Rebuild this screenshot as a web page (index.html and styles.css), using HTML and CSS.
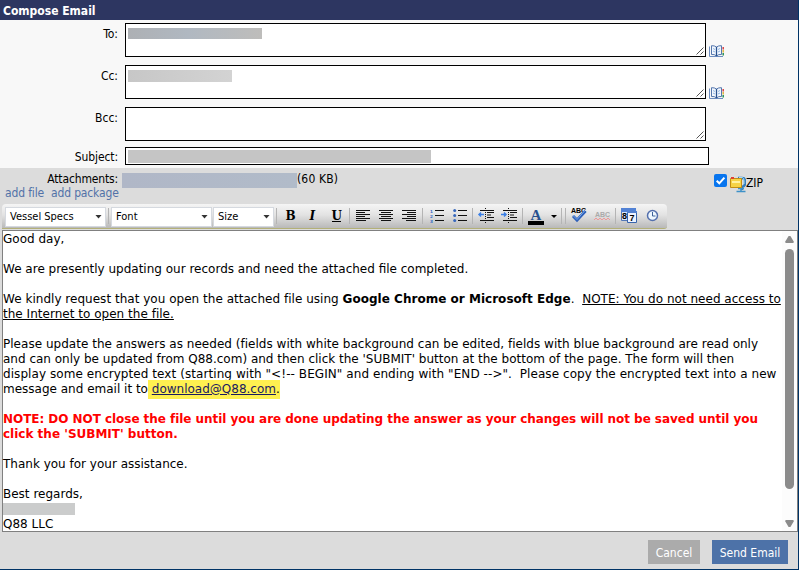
FILE: index.html
```html
<!DOCTYPE html>
<html>
    <head>
        <meta charset="utf-8">
        <title>Compose Email</title>
        <link rel="stylesheet" href="styles.css">
    </head>
    <body>
        <div class="window">
            <h1 class="title">Compose Email</h1>
            <div class="fields">
                <div class="row">
                    <label>To:</label>
                    <div class="area"><span class="mask mask-to"></span><svg class="grip" width="8" height="8"><path d="M0.5 7.5L7.5 0.5M4.5 7.5L7.5 4.5"/></svg></div>
                    <svg class="book" width="15" height="12" viewBox="0 0 15 12"><path d="M.5 1.5V11.5H14" fill="none" stroke="#6d8dc0"/><path d="M2.500 .7Q5.500 .5 7.5 2Q9.500 .5 12.5 .7V9.500Q9.500 9 7.5 11Q5.500 9 2.500 9.500Z" fill="#f2f7fe" stroke="#5577ad"/><path d="M7.5 2V11" stroke="#28518f" stroke-width="1.3"/><path d="M4 3.500L6 4.500M4 6L6 7M9 4.500L11 3.500M9 7L11 6" stroke="#91b7e4"/><path d="M14.200 2V4.500" stroke="#d84343" stroke-width="1.500"/><path d="M14.200 5V7.500" stroke="#dfb63f" stroke-width="1.500"/><path d="M14.200 8V10.500" stroke="#268f59" stroke-width="1.500"/></svg>
                </div>
                <div class="row">
                    <label>Cc:</label>
                    <div class="area"><span class="mask mask-cc"></span><svg class="grip" width="8" height="8"><path d="M0.5 7.5L7.5 0.5M4.5 7.5L7.5 4.5"/></svg></div>
                    <svg class="book" width="15" height="12" viewBox="0 0 15 12"><path d="M.5 1.5V11.5H14" fill="none" stroke="#6d8dc0"/><path d="M2.500 .7Q5.500 .5 7.5 2Q9.500 .5 12.5 .7V9.500Q9.500 9 7.5 11Q5.500 9 2.500 9.500Z" fill="#f2f7fe" stroke="#5577ad"/><path d="M7.5 2V11" stroke="#28518f" stroke-width="1.3"/><path d="M4 3.500L6 4.500M4 6L6 7M9 4.500L11 3.500M9 7L11 6" stroke="#91b7e4"/><path d="M14.200 2V4.500" stroke="#d84343" stroke-width="1.500"/><path d="M14.200 5V7.500" stroke="#dfb63f" stroke-width="1.500"/><path d="M14.200 8V10.500" stroke="#268f59" stroke-width="1.500"/></svg>
                </div>
                <div class="row">
                    <label>Bcc:</label>
                    <div class="area"><svg class="grip" width="8" height="8"><path d="M0.5 7.5L7.5 0.5M4.5 7.5L7.5 4.5"/></svg></div>
                </div>
                <div class="row subject">
                    <label>Subject:</label>
                    <div class="area"><span class="mask mask-subject"></span></div>
                </div>
            </div>
            <div class="attachments">
                <div class="left">
                    <div class="label">Attachments:</div>
                    <div class="links"><a>add file</a><a>add package</a></div>
                </div>
                <span class="mask mask-file"></span>
                <span class="size">(60 KB)</span>
                <div class="zip">
                    <svg width="13" height="13"><rect width="13" height="13" rx="2" fill="#0875ee"/><path d="M2.7 6.7L5.3 9.3L10.4 3.6" fill="none" stroke="#fff" stroke-width="2"/></svg>
                    <svg class="zip-icon" width="16" height="17"><path d="M8 2H12Q15 2 15 5V8Q15 10 12 11V14" fill="none" stroke="#337ebd" stroke-width="2.5"/><path d="M9 1.5H12.5Q14 2 14 5V8" fill="none" stroke="#a7dcf7"/><path d="M6.5 15.5H15.5M8 12.5H14M11 12V16" stroke="#3d91c8" stroke-width="1.5"/><path d="M.5 2.500H11.500V11.5H.5Z" fill="#f6d346" stroke="#c38e13"/><path d="M2 6H10" stroke="#fff2a1" stroke-width="2"/><path d="M1 2H4" stroke="#df4232" stroke-width="2"/></svg>
                    <span>ZIP</span>
                </div>
            </div>
            <div class="toolbar">
                <div class="combo wide">Vessel Specs<i class="arrow"></i></div>
                <i class="sep"></i>
                <div class="combo wide">Font<i class="arrow"></i></div>
                <div class="combo">Size<i class="arrow"></i></div>
                <svg class="tools" width="391" height="24" viewBox="276 204 391 24">
                    <path d="M276.5 208V224M349.5 208V224M422.5 208V224M472.5 208V224M522.5 208V224M561.5 208V224M565.5 208V224M615.5 208V224" stroke="#b4b4b4"/>
                    <g class="letters"><text x="285.500" y="220">B</text><text x="309.500" y="220" class="italic">I</text><text x="331.500" y="219.500">U</text></g>
                    <path d="M332 221.500H341" stroke="#000"/>
                    <g stroke="#111">
                        <path d="M356 210.500H370M356 212.500H365M356 214.500H370M356 216.500H365M356 218.500H370M356 220.500H366"/>
                        <path d="M379 210.500H393M381 212.500H391M379 214.500H393M381 216.500H391M379 218.500H393M381 220.500H391"/>
                        <path d="M402 210.500H416M407 212.500H416M402 214.500H416M407 216.500H416M402 218.500H416M406 220.500H416"/>
                        <path d="M435 210.500H444M435 215.500H444M435 220.500H444M458 210.500H467M458 215.500H467M458 220.500H467"/>
                        <path d="M480 210.500H494M487 212.500H494M487 215H491M487 217.500H494M480 220.500H494M503 210.500H517M510 212.500H517M510 215H514M510 217.500H517M503 220.500H517"/>
                        <path d="M485.500 208V223M508.500 208V223" stroke-dasharray="1 1"/>
                    </g>
                    <g class="digits"><text x="430" y="212.500">1</text><text x="430" y="217.500">2</text><text x="430" y="222.500">3</text></g>
                    <g fill="#3768bd"><circle cx="454.700" cy="210.500" r="1.500"/><circle cx="454.700" cy="215.500" r="1.500"/><circle cx="454.700" cy="220.500" r="1.500"/></g>
                    <path d="M484 214.500H479M481 212.500L479 214.500L481 216.500M501 214.500H506M504 212.500L506 214.500L504 216.500" fill="none" stroke="#3b7fe6" stroke-width="1.500"/>
                    <text x="530.500" y="220" class="color">A</text>
                    <path d="M528 221H544V225H528Z"/><path d="M551 215H557L554 218Z"/>
                    <text x="571" y="213" class="abc">ABC</text>
                    <path d="M573 216L577 220L585.500 211" fill="none" stroke="#2f61b9" stroke-width="3"/><path d="M573 215.500L577 219.500L584.500 211" fill="none" stroke="#79a9ef"/>
                    <text x="595" y="217" class="abc off">ABC</text>
                    <path d="M594 220L596 218L598 220L600 218L602 220L604 218L606 220L608 218L610 220" fill="none" stroke="#ee9999"/>
                    <path d="M621.500 208.500H635.500V220.500H621.500Z" fill="#d9e7fb" stroke="#5277b6"/><path d="M621 210H636" stroke="#5282d5" stroke-width="4"/>
                    <path d="M627.500 211.500H636.500V222.500H627.500Z" fill="#edf3ff" stroke="#3764aa"/><path d="M627 212H637" stroke="#5381cf" stroke-width="2"/>
                    <text x="622" y="219" class="find">8</text><text x="629.500" y="221" class="find">7</text>
                    <circle cx="652.500" cy="215.500" r="5" fill="#eef7ff" stroke="#5470ad" stroke-width="1.500"/><path d="M652.500 212V216H655.500" fill="none" stroke="#3c6299"/>
                </svg>
            </div>
            <div class="editor">
                <div class="message">
                    <p>Good day,</p>
                    <p>We are presently updating our records and need the attached file completed.</p>
                    <p><span class="loose">We kindly request that you open the attached file using <b>Google Chrome or Microsoft Edge</b>.&nbsp; <u>NOTE: You do not need access to<br>the Internet to open the file.</u></span></p>
                    <p><span class="loose">Please update the answers as needed (fields with white background can be edited, fields with blue background are read only</span><br>and can only be updated from Q88.com) and then click the 'SUBMIT' button at the bottom of the page. The form will then<br><span class="looser">display some encrypted text (starting with "&lt;!-- BEGIN" and ending with "END --&gt;".&nbsp; Please copy the encrypted text into a new</span><br>message and email it to<span class="mark"> <a>download@Q88.com</a>.</span></p>
                    <p class="warning"><span class="tight">NOTE: DO NOT close the file until you are done updating the answer as your changes will not be saved until you</span><br>click the 'SUBMIT' button.</p>
                    <p>Thank you for your assistance.</p>
                    <p>Best regards,<br><span class="mask mask-name"></span><br>Q88 LLC</p>
                </div>
                <div class="scrollbar"><i class="up"></i><i class="thumb"></i><i class="down"></i></div>
            </div>
            <div class="buttons">
                <div class="button cancel">Cancel</div>
                <div class="button send">Send Email</div>
            </div>
        </div>
    </body>
</html>
```
FILE: styles.css
```css
* {
    box-sizing: border-box;
}
body {
    margin: 0;
    font: 12px/15px "DejaVu Sans Condensed", "DejaVu Sans", sans-serif;
    color: #000;
}
svg {
    display: block;
    flex: none;
}
.window {
    width: 799px;
    height: 570px;
    border: solid #003366;
    border-width: 0 1px 1px 0;
    background: #dcdcdc;
    display: flex;
    flex-direction: column;
}
.title {
    margin: 0;
    height: 20px;
    padding-left: 3px;
    background: #2d3661;
    color: #fff;
    font-size: 12px;
    line-height: 22px;
}
.fields {
    height: 148px;
    padding-top: 3px;
    background: #f8f8f8;
}
.row {
    display: flex;
    height: 34px;
    margin-bottom: 8px;
}
.row label {
    width: 118px;
    margin-right: 7px;
    padding-top: 4px;
    text-align: right;
}
.area {
    position: relative;
    width: 581px;
    padding: 4px 2px;
    border: 1px solid #000;
    background: #fff;
}
.row.subject {
    height: 18px;
    margin-top: -2px;
}
.subject .area {
    width: 584px;
    padding-top: 2px;
}
.row.subject label {
    padding-top: 3px;
    letter-spacing: -.1px;
}
.grip {
    position: absolute;
    right: 1px;
    bottom: 1px;
}
.grip path {
    stroke: #555;
}
.book {
    margin: 22px 0 0 3px;
}
.mask {
    display: block;
}
.mask-to {
    width: 134px;
    height: 11px;
    background: linear-gradient(90deg, #adb0b4, #b0b8c1 45%, #bebdbb);
}
.mask-cc {
    width: 104px;
    height: 12px;
    background: linear-gradient(90deg, #c7c7c7, #d3d3d3);
}
.mask-subject {
    width: 303px;
    height: 13px;
    background: #c5c5c5;
}
.mask-file {
    width: 175px;
    height: 15px;
    margin-top: 5px;
    background: linear-gradient(90deg, #b0b7c7, #b1bbc9);
}
.attachments {
    display: flex;
    height: 36px;
}
.left {
    width: 122px;
    padding-top: 4px;
    line-height: 14px;
    letter-spacing: -.15px;
}
.label {
    width: 118px;
    text-align: right;
}
.links {
    display: flex;
    gap: 7px;
    padding-left: 5px;
    color: #5272a8;
    white-space: nowrap;
}
.size {
    padding-top: 4px;
    letter-spacing: .15px;
}
.zip {
    display: flex;
    margin: 6px 35px 0 auto;
}
.zip-icon {
    margin: 2px 0 0 3px;
}
.zip span {
    padding-top: 2px;
}
.toolbar {
    display: flex;
    align-items: center;
    width: 665px;
    height: 25px;
    margin-left: 2px;
    padding-left: 3px;
    border-bottom: 1px solid #b3b078;
    border-radius: 4px 4px 3px 0;
    background: linear-gradient(#f5f5f5, #e3e3e3 45%, #b9b9b9);
}
.combo {
    display: flex;
    align-items: center;
    justify-content: space-between;
    width: 61px;
    height: 20px;
    margin: 1px 1px 0 0;
    padding: 0 3px 0 4px;
    border: 1px solid #d5d9df;
    background: #fff;
    font-size: 11px;
}
.combo.wide {
    width: 101px;
}
.arrow {
    width: 7px;
    height: 4px;
    background: #333;
    clip-path: polygon(0 0, 100% 0, 50% 100%);
}
.sep {
    width: 1px;
    height: 16px;
    margin: 0 2px 0 1px;
    background: #b4b4b4;
}
.tools {
    margin-left: 1px;
}
.letters {
    font: bold 12px "DejaVu Serif", serif;
}
.italic {
    font-style: italic;
}
.digits {
    font: bold 4.2px/1 "DejaVu Sans", sans-serif;
    fill: #3269c4;
}
.color {
    font: bold 15px "Liberation Serif", serif;
    fill: #28518f;
}
.abc {
    font: bold 7px "Liberation Sans", sans-serif;
}
.off {
    fill: #aaa;
}
.find {
    font: bold 9px "Liberation Sans", sans-serif;
}
.editor {
    display: flex;
    justify-content: space-between;
    height: 302px;
    margin: 1px 0 0 2px;
    border: 1px solid #808080;
    background: #fff;
}
.message {
    width: 780px;
    padding-top: 1px;
    font: 12px/15px "DejaVu Sans", sans-serif;
    white-space: nowrap;
}
.message p {
    margin: 0 0 15px;
}
.loose {
    letter-spacing: .022px;
}
.looser {
    letter-spacing: .072px;
}
.tight {
    letter-spacing: -.046px;
}
.mark {
    padding: 2px 0 3px;
    background: #fff050;
}
.mark a {
    color: #1a1a60;
    text-decoration: underline;
}
.warning {
    color: #f00;
    font-weight: bold;
}
.mask-name {
    display: inline-block;
    width: 72px;
    height: 12px;
    vertical-align: top;
    margin: 1px 0 0;
    background: #cbcccc;
}
.scrollbar {
    display: flex;
    flex-direction: column;
    align-items: center;
    width: 15px;
    padding-top: 5px;
    background: #fcfcfc;
}
.up, .down {
    width: 9px;
    height: 7px;
    background: #8b8b8b;
    clip-path: polygon(40% 0, 60% 0, 100% 85%, 90% 100%, 10% 100%, 0 85%);
}
.down {
    margin-top: 31px;
    transform: rotate(180deg);
}
.thumb {
    width: 9px;
    height: 240px;
    margin-top: 6px;
    border-radius: 5px;
    background: #8b8b8b;
}
.buttons {
    display: flex;
    justify-content: flex-end;
    gap: 12px;
    padding: 8px 10px 0 0;
}
.button {
    width: 76px;
    height: 24px;
    background: #4d72a8;
    color: #fff;
    line-height: 26px;
    text-align: center;
}
.cancel {
    width: 52px;
    background: #ababab;
}
```
